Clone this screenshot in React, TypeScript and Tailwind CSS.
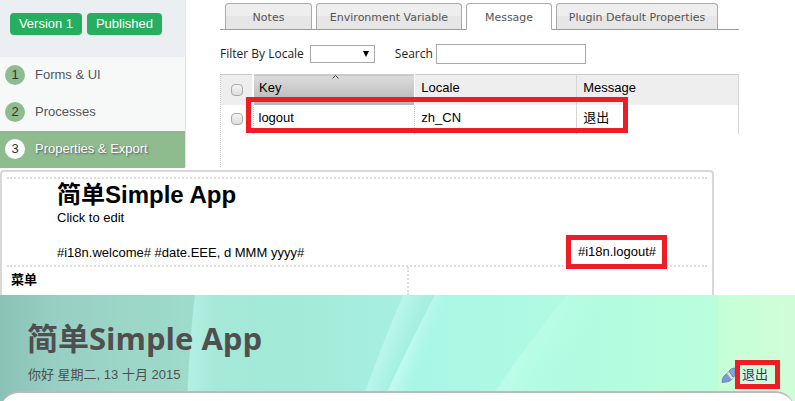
import React from 'react';

const steps = [
  { id: 1, label: 'Forms & UI', active: false },
  { id: 2, label: 'Processes', active: false },
  { id: 3, label: 'Properties & Export', active: true },
];

const tabs = [
  { label: 'Notes', width: 'w-[87px]', active: false },
  { label: 'Environment Variable', width: 'w-[146px]', active: false },
  { label: 'Message', width: 'w-[86px]', active: true },
  { label: 'Plugin Default Properties', width: 'w-[162px]', active: false },
];

function Sidebar() {
  return (
    <aside className="w-[186px] shrink-0 border-r border-[#e2e4e4] bg-[#f6f9f8]">
      <div className="flex h-[57px] gap-[5px] bg-[#eceff1] pl-[10px] pt-[13px]">
        <button className="h-[22px] w-[72px] rounded bg-[#27ae60] text-[13px] leading-[22px] text-white">Version 1</button>
        <button className="h-[22px] w-[75px] rounded bg-[#27ae60] text-[13px] leading-[22px] text-white">Published</button>
      </div>
      <nav>
        {steps.map((step) => (
          <a
            key={step.id}
            href="#"
            className={`flex h-[37px] items-center gap-[10px] pb-[2px] pl-[5px] text-[13px] ${
              step.active ? 'bg-[#8fbc8f] text-white' : 'text-[#555555]'
            }`}
          >
            <span
              className={`flex h-5 w-5 items-center justify-center rounded-full text-[#333333] ${
                step.active ? 'bg-white' : 'bg-[#8fbc8f]'
              }`}
            >
              {step.id}
            </span>
            <span className={step.active ? '[text-shadow:1px_1px_2px_#555555]' : ''}>{step.label}</span>
          </a>
        ))}
      </nav>
    </aside>
  );
}

function Tabs() {
  return (
    <div className="flex gap-1 border-b border-[#999999] pl-[5px] font-['DejaVu_Sans',sans-serif]">
      {tabs.map((tab) => (
        <button
          key={tab.label}
          className={`-mb-px h-[27px] whitespace-nowrap rounded-t border border-[#aaaaaa] pt-1 text-[11px] text-[#555555] ${tab.width} ${
            tab.active ? 'border-b-white bg-white' : 'border-b-[#999999] bg-linear-to-b from-[#eeeeee] from-50% to-[#e6e6e6] to-50%'
          }`}
        >
          {tab.label}
        </button>
      ))}
    </div>
  );
}

function Checkbox({ label }: { label: string }) {
  return (
    <input
      type="checkbox"
      aria-label={label}
      className="mx-auto mt-1 block h-3 w-3 appearance-none rounded-sm border border-[#aaaaaa] bg-linear-to-b from-[#f4f4f4] to-[#dddddd]"
    />
  );
}

function MessagePanel() {
  return (
    <main className="min-w-0 flex-1 pl-[34px] pr-14 pt-[3px]">
      <Tabs />
      <div className="flex h-[44px] items-center pt-[3px] font-['Open_Sans',sans-serif] text-[12px] text-[#222222]">
        <label htmlFor="locale" className="mr-[6px]">Filter By Locale</label>
        <div className="relative mr-5">
          <select id="locale" className="block h-[18px] w-[65px] appearance-none border border-[#a9a9a9] bg-white" />
          <svg viewBox="0 0 6 6" className="pointer-events-none absolute right-[6px] top-[6px] h-[6px] w-[6px]">
            <path d="M0 0h6L3 6z" fill="#000" />
          </svg>
        </div>
        <label htmlFor="search" className="mr-[3px]">Search</label>
        <input id="search" type="text" className="h-5 w-[150px] border border-[#a9a9a9] bg-white" />
      </div>
      <div className="relative h-[93px] border-l border-dotted border-[#cccccc]">
        <table className="w-full table-fixed border-collapse text-left text-[13px] leading-[15px] text-black">
          <thead>
            <tr className="h-[30px] border-t border-[#cccccc] bg-[#eeeeee]">
              <th className="w-8 pb-1">
                <Checkbox label="Select all" />
              </th>
              <th className="relative border-l-2 border-white bg-linear-to-b from-[#dcdcdc] to-[#b4b4b4] pb-1 pl-[5px] font-normal">
                <svg viewBox="0 0 7 4" className="absolute left-[78px] top-0 h-1 w-[7px]">
                  <path d="M.5 3.5l3-3 3 3" fill="none" stroke="#444" />
                </svg>
                Key
              </th>
              <th className="border-l border-white pb-1 pl-[6px] font-normal">Locale</th>
              <th className="border-x border-[#d6d6d6] pb-1 pl-[6px] font-normal">Message</th>
            </tr>
          </thead>
          <tbody>
            <tr className="h-[29px]">
              <td className="pb-1">
                <Checkbox label="Select logout" />
              </td>
              <td className="border-l border-dotted border-[#cccccc] pb-1 pl-[5px]">logout</td>
              <td className="border-l border-dotted border-[#cccccc] pb-1 pl-[6px]">zh_CN</td>
              <td className="border-x border-[#d6d6d6] pb-1 pl-[6px]">退出</td>
            </tr>
          </tbody>
        </table>
        {/* Highlight around the row */}
        <div className="pointer-events-none absolute left-[25px] right-[111px] top-[23px] h-9 border-5 border-[#ee1c24]" />
      </div>
    </main>
  );
}

function Editor() {
  return (
    <section className="mr-[81px] h-[125px] rounded-t-sm border-2 border-b-0 border-[#d8d8d8] px-[5px] pt-[5px] text-[13px] leading-[15px] text-black">
      <div className="h-[90px] border-y-2 border-dotted border-[#dddddd] pl-[50px] pr-10">
        <h1 className="pt-px text-[24px] font-bold leading-[30px]">简单Simple App</h1>
        <p>Click to edit</p>
        <div className="flex items-start justify-between pt-[10px]">
          <span className="pt-[10px]">#i18n.welcome# #date.EEE, d MMM yyyy#</span>
          <a href="#" className="relative border-5 border-[#ee1c24] bg-white px-[6px] py-[5px] pl-[7px] leading-[14px]">#i18n.logout#</a>
        </div>
      </div>
      <div className="flex h-7">
        <div className="w-[402px] border-r-2 border-dotted border-[#dddddd] pl-1 pt-[5px] font-bold">菜单</div>
      </div>
    </section>
  );
}

function BannerArt() {
  return (
    <svg viewBox="0 0 795 106" preserveAspectRatio="none" className="absolute inset-0 h-full w-full" aria-hidden="true">
      <defs>
        <linearGradient id="left">
          <stop offset="0" stopColor="#8bc2b6" />
          <stop offset=".3" stopColor="#98d0c3" />
          <stop offset="1" stopColor="#9edccb" />
        </linearGradient>
        <linearGradient id="mid">
          <stop offset="0" stopColor="#b3f0e3" />
          <stop offset=".12" stopColor="#a5e8d8" />
          <stop offset=".4" stopColor="#a3ead8" />
          <stop offset="1" stopColor="#a8f1e1" />
        </linearGradient>
        <linearGradient id="right">
          <stop offset="0" stopColor="#a8f5e6" />
          <stop offset=".5" stopColor="#b0fae2" />
          <stop offset="1" stopColor="#b9ffdc" />
        </linearGradient>
        <linearGradient id="edge">
          <stop offset="0" stopColor="#c5ffd6" />
          <stop offset="1" stopColor="#d0fdd7" />
        </linearGradient>
        <linearGradient id="streakA" gradientUnits="userSpaceOnUse" x1="385" y1="48" x2="405" y2="56">
          <stop offset="0" stopColor="#b9f6ea" />
          <stop offset="1" stopColor="#a5f0e1" />
        </linearGradient>
        <linearGradient id="streakB" gradientUnits="userSpaceOnUse" x1="411" y1="48" x2="431" y2="56">
          <stop offset="0" stopColor="#bffaf0" />
          <stop offset="1" stopColor="#a8f5e6" stopOpacity="0" />
        </linearGradient>
        <linearGradient id="streakC" gradientUnits="userSpaceOnUse" x1="528" y1="50" x2="580" y2="75">
          <stop offset="0" stopColor="#bdfde8" stopOpacity=".8" />
          <stop offset="1" stopColor="#b5fde0" stopOpacity="0" />
        </linearGradient>
      </defs>
      <rect width="200" height="106" fill="url(#left)" />
      <path d="M195 0h245L383 106H187Q190 40 195 0z" fill="url(#mid)" />
      <path d="M403 0h33L387 97h-22Q382 50 403 0z" fill="url(#streakA)" />
      <path d="M435 0H718V106H383Q405 58 435 0z" fill="url(#right)" />
      <path d="M435 0h50L433 106H383Q405 58 435 0z" fill="url(#streakB)" />
      <path d="M567 0Q530 45 494 98V106h110L660 0z" fill="url(#streakC)" />
      <rect x="718" width="77" height="106" fill="url(#edge)" />
    </svg>
  );
}

function Banner() {
  return (
    <header className="relative h-[106px] overflow-hidden text-[#4f4f4f]">
      <BannerArt />
      <div className="relative pl-[27px] pr-[15px]">
        <h2 className="pt-[22px] font-['Open_Sans','Noto_Sans_CJK_SC',sans-serif] text-[31px] font-bold leading-[42px]">简单Simple App</h2>
        <div className="flex items-start justify-between text-[13px] leading-[15px]">
          <span className="pl-px pt-2">你好 星期二, 13 十月 2015</span>
          <div className="flex items-center pt-px">
            <svg viewBox="0 0 14 16" className="h-4 w-[14px]" aria-hidden="true">
              <path d="M1 15.5Q.5 11 4 8q1.500-1.500 3-1l4 5q-1 3-10 3.500z" fill="#7c9bd2" stroke="#6482b8" strokeWidth=".8" />
              <path d="M5.500 6.500l5 6 2-2-4.500-6z" fill="#dfe6de" stroke="#929c90" strokeWidth=".7" />
              <path d="M8 4q2-3 6-3v8l-2 1z" fill="#86a4da" stroke="#6482b8" strokeWidth=".8" />
            </svg>
            <a href="#" className="border-5 border-[#ee1c24] py-[2px] pl-[2px] pr-[7px] text-[#551a8b]">退出</a>
          </div>
        </div>
      </div>
      {/* Top edge of the page body */}
      <div className="absolute inset-x-0 top-24 h-10 rounded-t-[20px] border-t-2 border-[#bbbbbb] bg-white" />
    </header>
  );
}

export default function App() {
  return (
    <div className="bg-white font-['Liberation_Sans','Noto_Sans_CJK_SC',sans-serif]">
      <div className="mb-[3px] flex h-[167px]">
        <Sidebar />
        <MessagePanel />
      </div>
      <Editor />
      <Banner />
    </div>
  );
}
